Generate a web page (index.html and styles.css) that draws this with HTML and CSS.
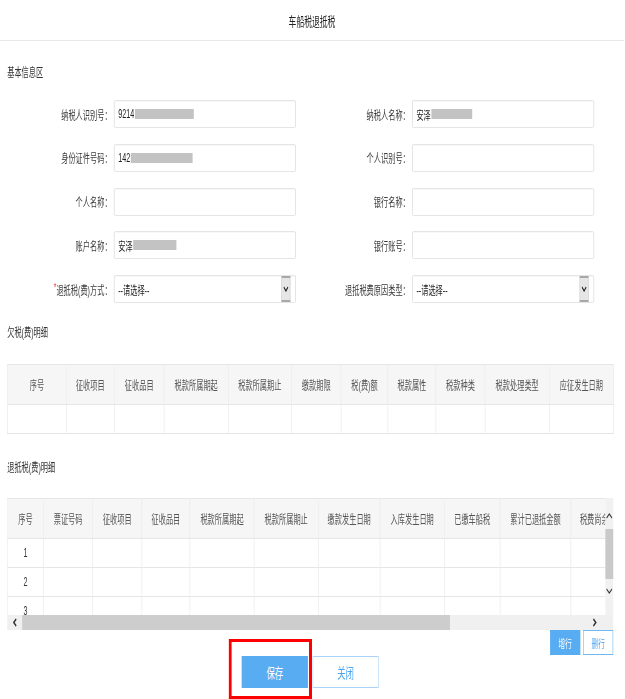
FILE: index.html
```html
<!DOCTYPE html>
<html lang="zh-CN">
<head>
<meta charset="utf-8">
<title>车船税退抵税</title>
<link rel="stylesheet" href="styles.css">
</head>
<body>
<div class="page">
  <div class="header"><span class="title">车船税退抵税</span></div>
  <div class="content">
    <div class="section-title first">基本信息区</div>
    <div class="form">
      <label class="lbl">纳税人识别号：</label>
      <div class="input"><span>9214</span><i class="mask" style="width:98px"></i></div>
      <label class="lbl">纳税人名称：</label>
      <div class="input"><span>安泽</span><i class="mask" style="width:68px"></i></div>

      <label class="lbl">身份证件号码：</label>
      <div class="input"><span>142</span><i class="mask" style="width:103px"></i></div>
      <label class="lbl">个人识别号：</label>
      <div class="input"></div>

      <label class="lbl">个人名称：</label>
      <div class="input"></div>
      <label class="lbl">银行名称：</label>
      <div class="input"></div>

      <label class="lbl">账户名称：</label>
      <div class="input"><span>安泽</span><i class="mask" style="width:72px"></i></div>
      <label class="lbl">银行账号：</label>
      <div class="input"></div>

      <label class="lbl"><em class="req">*</em>退抵税(费)方式：</label>
      <div class="input select"><span class="sel-text">--请选择--</span><span class="sel-btn"><svg width="9" height="6" viewBox="0 0 9 6"><path d="M1 1 L4.5 5 L8 1" fill="none" stroke="#222" stroke-width="1.6"/></svg></span></div>
      <label class="lbl">退抵税费原因类型：</label>
      <div class="input select"><span class="sel-text">--请选择--</span><span class="sel-btn"><svg width="9" height="6" viewBox="0 0 9 6"><path d="M1 1 L4.5 5 L8 1" fill="none" stroke="#222" stroke-width="1.6"/></svg></span></div>
    </div>

    <div class="section-title s2">欠税(费)明细</div>
    <table class="grid t1">
      <colgroup>
        <col style="width:98px"><col style="width:80px"><col style="width:83px"><col style="width:107px"><col style="width:105px"><col style="width:83px"><col style="width:78px"><col style="width:80px"><col style="width:82px"><col style="width:107px"><col style="width:107px">
      </colgroup>
      <thead>
        <tr><th>序号</th><th>征收项目</th><th>征收品目</th><th>税款所属期起</th><th>税款所属期止</th><th>缴款期限</th><th>税(费)额</th><th>税款属性</th><th>税款种类</th><th>税款处理类型</th><th>应征发生日期</th></tr>
      </thead>
      <tbody>
        <tr><td></td><td></td><td></td><td></td><td></td><td></td><td></td><td></td><td></td><td></td><td></td></tr>
      </tbody>
    </table>

    <div class="section-title s3">退抵税(费)明细</div>
    <div class="grid2">
      <div class="grid2-main">
        <div class="grid2-view">
          <table class="grid t2">
            <colgroup>
              <col style="width:60px"><col style="width:82px"><col style="width:82px"><col style="width:80px"><col style="width:107px"><col style="width:107px"><col style="width:103px"><col style="width:107px"><col style="width:93px"><col style="width:118px"><col style="width:126px">
            </colgroup>
            <thead>
              <tr><th>序号</th><th>票证号码</th><th>征收项目</th><th>征收品目</th><th>税款所属期起</th><th>税款所属期止</th><th>缴款发生日期</th><th>入库发生日期</th><th>已缴车船税</th><th>累计已退抵金额</th><th>税费尚余可退金额</th></tr>
            </thead>
            <tbody>
              <tr><td>1</td><td></td><td></td><td></td><td></td><td></td><td></td><td></td><td></td><td></td><td></td></tr>
              <tr><td>2</td><td></td><td></td><td></td><td></td><td></td><td></td><td></td><td></td><td></td><td></td></tr>
              <tr><td>3</td><td></td><td></td><td></td><td></td><td></td><td></td><td></td><td></td><td></td><td></td></tr>
            </tbody>
          </table>
        </div>
        <div class="vbar">
          <div class="vbtn up"><svg width="11" height="6" viewBox="0 0 11 6"><path d="M1 5 L5.5 1 L10 5" fill="none" stroke="#333" stroke-width="1.5"/></svg></div>
          <div class="vthumb"></div>
          <div class="vbtn down"><svg width="11" height="6" viewBox="0 0 11 6"><path d="M1 1 L5.5 5 L10 1" fill="none" stroke="#333" stroke-width="1.5"/></svg></div>
        </div>
      </div>
      <div class="hbar">
        <div class="hbtn"><svg width="8" height="9" viewBox="0 0 8 9"><path d="M6 1 L2 4.5 L6 8" fill="none" stroke="#333" stroke-width="2"/></svg></div>
        <div class="hthumb"></div>
        <div class="htrack"></div>
        <div class="hbtn right"><svg width="8" height="9" viewBox="0 0 8 9"><path d="M2 1 L6 4.5 L2 8" fill="none" stroke="#333" stroke-width="2"/></svg></div>
      </div>
    </div>

    <div class="row-actions">
      <button class="btn-sm primary">增行</button>
      <button class="btn-sm outline">删行</button>
    </div>
  </div>

  <div class="footer">
    <div class="save-wrap">
      <button class="btn-lg primary">保存</button>
      <span class="mark"></span>
    </div>
    <button class="btn-lg outline">关闭</button>
  </div>
</div>
</body>
</html>
```

FILE: styles.css
```css
html, body {
  margin: 0;
  padding: 0;
  overflow: hidden;
  background: #fff;
}

.page {
  width: 1040px;
  height: 699px;
  transform: scaleX(0.6);
  transform-origin: 0 0;
  font-family: "Liberation Sans", "Noto Sans CJK SC", sans-serif;
  font-size: 12px;
  color: #333;
}

.header {
  height: 40px;
  border-bottom: 1px solid #e9e9e9;
  display: flex;
  align-items: center;
  justify-content: center;
}

.title {
  font-size: 13px;
  color: #222;
}

.content {
  padding: 0 18px 0 12px;
}

.section-title {
  line-height: 20px;
  height: 20px;
  color: #333;
  font-size: 12px;
}

.section-title.first { margin-top: 22px; }
.section-title.s2 { margin-top: 20px; }
.section-title.s3 { margin-top: 24px; }

.form {
  margin-top: 17px;
  display: grid;
  grid-template-columns: 178px 303px 194px 303px;
  grid-auto-rows: 28px;
  row-gap: 15.75px;
}

.lbl {
  display: flex;
  align-items: center;
  justify-content: flex-end;
  padding-right: 4px;
  color: #3a3a3a;
  white-space: nowrap;
}

.req {
  font-style: normal;
  color: #e33;
  font-size: 11px;
  position: relative;
  top: -2px;
}

.input {
  box-sizing: border-box;
  border: 1px solid #dedede;
  border-radius: 2px;
  display: flex;
  align-items: center;
  padding-left: 6px;
  color: #222;
  box-shadow: inset 0 1px 1px rgba(0,0,0,0.03);
}

.mask {
  display: inline-block;
  height: 10px;
  background: #c3c3c3;
  margin-left: 1px;
}

.select {
  align-items: stretch;
  padding-right: 8px;
}

.sel-text {
  flex: 1;
  display: flex;
  align-items: center;
}

.sel-btn {
  width: 15px;
  box-sizing: border-box;
  background: #e6e6e6;
  border-top: 2px solid #a8a8a8;
  border-bottom: 2px solid #a8a8a8;
  border-left: 1px solid #cfcfcf;
  border-right: 1px solid #cfcfcf;
  display: flex;
  align-items: center;
  justify-content: center;
}

.grid {
  border-collapse: collapse;
  table-layout: fixed;
}

.grid th,
.grid td {
  border: 1px solid #e6e6e6;
  text-align: center;
  font-weight: normal;
  padding: 0;
  white-space: nowrap;
  overflow: hidden;
}

.grid th {
  background: #f6f6f6;
  color: #555;
  height: 39px;
}

.grid td {
  height: 28px;
  color: #333;
}

.t1 {
  width: 1010px;
  margin-top: 21px;
}

.grid2 {
  width: 1010px;
  margin-top: 20px;
}

.grid2-main {
  display: flex;
  height: 117px;
}

.grid2-view {
  flex: 1;
  min-width: 0;
  overflow: hidden;
}

.t2 {
  width: 1065px;
}

.vbar {
  width: 13px;
  background: #f1f1f1;
  display: flex;
  flex-direction: column;
}

.vbtn {
  display: flex;
  justify-content: center;
}

.vbtn.up {
  height: 31px;
  align-items: flex-start;
  padding-top: 15px;
  box-sizing: border-box;
}

.vthumb {
  height: 50px;
  background: #c9c9c9;
}

.vbtn.down {
  flex: 1;
  align-items: flex-start;
  padding-top: 9px;
  box-sizing: border-box;
}

.hbar {
  display: flex;
  height: 15px;
  background: #f0f0f0;
}

.hbtn {
  width: 25px;
  display: flex;
  align-items: center;
  justify-content: center;
}

.hbtn.right {
  margin-right: 19px;
}

.hthumb {
  width: 713px;
  background: #cdcdcd;
}

.htrack {
  flex: 1;
}

.row-actions {
  display: flex;
  justify-content: flex-end;
  gap: 5px;
  width: 1010px;
}

button {
  font-family: inherit;
  cursor: pointer;
  box-sizing: border-box;
  padding: 0;
}

.btn-sm {
  width: 50px;
  height: 25px;
  font-size: 11px;
}

.btn-lg {
  width: 110px;
  height: 32px;
  font-size: 14px;
}

.primary {
  background: #58acf2;
  border: 1px solid #58acf2;
  color: #fff;
}

.outline {
  background: #fff;
  border: 1px solid #a9d4f7;
  color: #4ea6ef;
}

.btn-sm.outline {
  border-color: #72b8f3;
}

.footer {
  margin-top: 1px;
  display: flex;
  justify-content: center;
  gap: 8px;
  padding-right: 6px;
}

.save-wrap {
  position: relative;
  display: flex;
}

.mark {
  position: absolute;
  left: -22px;
  right: -7px;
  top: -17px;
  bottom: -11px;
  border-top: 3px solid #ff0000;
  border-bottom: 3px solid #ff0000;
  border-left: 5px solid #ff0000;
  border-right: 5px solid #ff0000;
  pointer-events: none;
}
```
